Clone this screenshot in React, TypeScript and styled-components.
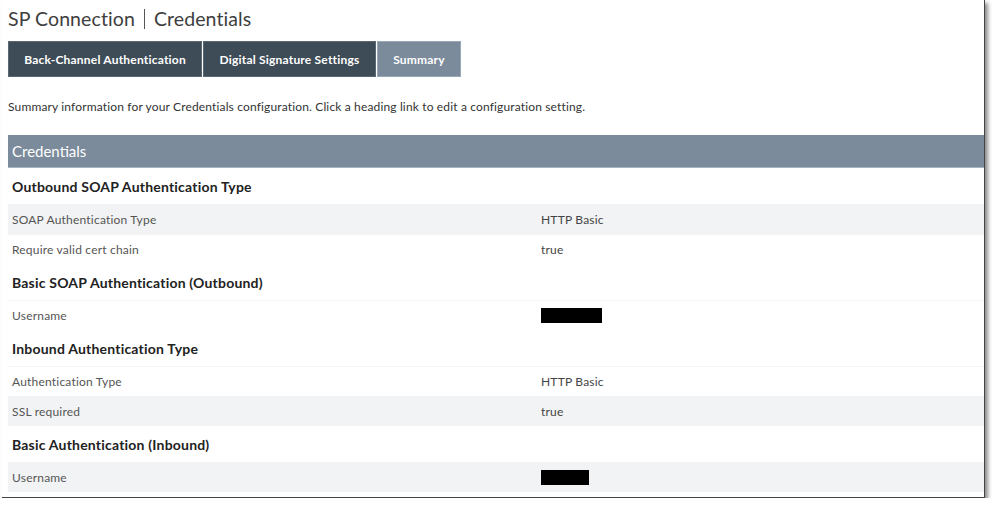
import React from "react";
import styled, { createGlobalStyle } from "styled-components";

const Global = createGlobalStyle`
  html, body { margin: 0; padding: 0; background: #fff; }
  body { font-family: Lato, "Open Sans", Arial, sans-serif; }
`;

const Frame = styled.div`
  margin-left: 2px;
  width: 983px;
  height: 498px;
  border-right: 1px solid #444;
  border-bottom: 1px solid #444;
  box-shadow: 3px 3px 4px rgba(0, 0, 0, 0.45);
  background: #fff;
  padding-left: 6px;
  box-sizing: border-box;
  overflow: hidden;
`;

const Title = styled.h1`
  margin: 0;
  height: 41px;
  padding-bottom: 4px;
  box-sizing: border-box;
  font-size: 19.5px;
  font-weight: 400;
  letter-spacing: 0.1px;
  color: #3e3e3e;
  display: flex;
  align-items: center;
  gap: 9px;
`;

const Sep = styled.span`
  display: inline-block;
  width: 1px;
  height: 20px;
  background: #555;
`;

const Tabs = styled.div`
  display: flex;
  gap: 1px;
  height: 36px;
`;

const Tab = styled.div<{ $active?: boolean; $w: number }>`
  width: ${(p) => p.$w}px;
  box-sizing: border-box;
  background: ${(p) => (p.$active ? "#7b8b9b" : "#3e4c57")};
  border: 1px solid ${(p) => (p.$active ? "#9aa7b4" : "#5b6771")};
  color: #fff;
  font-weight: 700;
  font-size: 12px;
  letter-spacing: 0.2px;
  display: flex;
  align-items: center;
  justify-content: center;
`;

const Description = styled.p`
  margin: 0;
  height: 58px;
  display: flex;
  align-items: center;
  font-size: 12px;
  letter-spacing: 0.15px;
  color: #333;
`;

const SectionBar = styled.div`
  height: 33px;
  background: #7b8b9b;
  color: #fff;
  font-size: 15px;
  display: flex;
  align-items: center;
  padding-left: 4px;
  border-bottom: 1px solid #a9b5c0;
  box-sizing: border-box;
`;

const GroupHeading = styled.div`
  height: 36px;
  display: flex;
  align-items: center;
  padding-left: 4px;
  font-size: 14px;
  font-weight: 700;
  letter-spacing: 0.2px;
  color: #222;
`;

const Row = styled.div<{ $shaded?: boolean }>`
  height: 30px;
  box-sizing: border-box;
  display: grid;
  grid-template-columns: 529px 1fr;
  align-items: center;
  padding-left: 4px;
  background: ${(p) => (p.$shaded ? "#f2f3f4" : "#fff")};
  border-top: 1px solid ${(p) => (p.$shaded ? "#f2f3f4" : "#f3f4f5")};
  font-size: 12px;
  letter-spacing: 0.2px;
`;

const Label = styled.span`
  color: #555;
`;

const Value = styled.span`
  color: #444;
`;

const Redacted = styled.span<{ $w: number }>`
  display: block;
  width: ${(p) => p.$w}px;
  height: 15px;
  background: #000;
`;

type Item = { label: string; value?: string; redact?: number; shaded?: boolean };
type Group = { heading: string; items: Item[] };

const groups: Group[] = [
  {
    heading: "Outbound SOAP Authentication Type",
    items: [
      { label: "SOAP Authentication Type", value: "HTTP Basic", shaded: true },
      { label: "Require valid cert chain", value: "true" },
    ],
  },
  {
    heading: "Basic SOAP Authentication (Outbound)",
    items: [{ label: "Username", redact: 61 }],
  },
  {
    heading: "Inbound Authentication Type",
    items: [
      { label: "Authentication Type", value: "HTTP Basic" },
      { label: "SSL required", value: "true", shaded: true },
    ],
  },
  {
    heading: "Basic Authentication (Inbound)",
    items: [{ label: "Username", redact: 48, shaded: true }],
  },
];

export default function App() {
  return (
    <>
      <Global />
      <Frame>
        <Title>
          SP Connection <Sep /> Credentials
        </Title>
        <Tabs>
          <Tab $w={194}>Back-Channel Authentication</Tab>
          <Tab $w={173}>Digital Signature Settings</Tab>
          <Tab $w={84} $active>
            Summary
          </Tab>
        </Tabs>
        <Description>
          Summary information for your Credentials configuration. Click a heading link to edit a
          configuration setting.
        </Description>
        <SectionBar>Credentials</SectionBar>
        {groups.map((g) => (
          <React.Fragment key={g.heading}>
            <GroupHeading>{g.heading}</GroupHeading>
            {g.items.map((it) => (
              <Row key={it.label} $shaded={it.shaded}>
                <Label>{it.label}</Label>
                {it.redact ? <Redacted $w={it.redact} /> : <Value>{it.value}</Value>}
              </Row>
            ))}
          </React.Fragment>
        ))}
      </Frame>
    </>
  );
}
